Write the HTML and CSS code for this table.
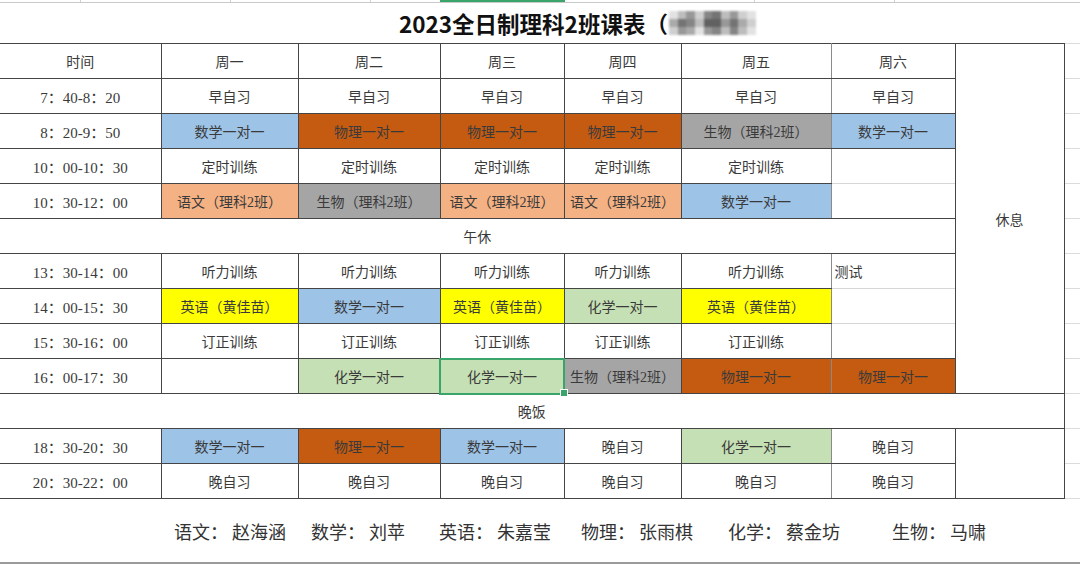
FILE: index.html
```html
<!DOCTYPE html>
<html lang="zh-CN">
<head>
<meta charset="utf-8">
<title>2023全日制理科2班课表</title>
<link rel="stylesheet" href="styles.css">
</head>
<body>
<div class="strip">
  <span class="tick t1"></span><span class="tick t2"></span><span class="tick t3"></span>
  <span class="sel-col"></span>
  <span class="tick t4"></span><span class="tick t5"></span>
</div>
<div class="title">
  <span>2023全日制理科2班课表（</span>
  <div class="mosaic">
    <i class="g1"></i><i class="g3"></i><i class="g5"></i><i class="g2"></i><i class="g6"></i><i class="g7"></i><i class="g3"></i><i class="g5"></i><i class="g2"></i><i class="g1"></i>
    <i class="g4"></i><i class="g7"></i><i class="g6"></i><i class="g3"></i><i class="g8"></i><i class="g8"></i><i class="g5"></i><i class="g7"></i><i class="g4"></i><i class="g2"></i>
    <i class="g2"></i><i class="g5"></i><i class="g4"></i><i class="g1"></i><i class="g5"></i><i class="g6"></i><i class="g3"></i><i class="g6"></i><i class="g3"></i><i class="g1"></i>
  </div>
</div>
<table class="sheet">
  <colgroup>
    <col class="c-time"><col class="c-mon"><col class="c-tue"><col class="c-wed"><col class="c-thu"><col class="c-fri"><col class="c-sat"><col class="c-rest"><col class="c-x">
  </colgroup>
  <tr class="r">
    <td class="first">时间</td><td>周一</td><td>周二</td><td>周三</td><td>周四</td><td>周五</td><td>周六</td>
    <td class="rest" rowspan="10">休息</td><td class="x"></td>
  </tr>
  <tr class="r">
    <td class="first time">7：40-8：20</td><td>早自习</td><td>早自习</td><td>早自习</td><td>早自习</td><td>早自习</td><td>早自习</td><td class="x"></td>
  </tr>
  <tr class="r">
    <td class="first time">8：20-9：50</td><td class="blue">数学一对一</td><td class="orange">物理一对一</td><td class="orange">物理一对一</td><td class="orange">物理一对一</td><td class="grey">生物（理科2班）</td><td class="blue">数学一对一</td><td class="x"></td>
  </tr>
  <tr class="r">
    <td class="first time">10：00-10：30</td><td>定时训练</td><td>定时训练</td><td>定时训练</td><td>定时训练</td><td>定时训练</td><td class="lb"></td><td class="x"></td>
  </tr>
  <tr class="r">
    <td class="first time">10：30-12：00</td><td class="salmon">语文（理科2班）</td><td class="grey">生物（理科2班）</td><td class="salmon">语文（理科2班）</td><td class="salmon">语文（理科2班）</td><td class="blue">数学一对一</td><td class="lt"></td><td class="x"></td>
  </tr>
  <tr>
    <td class="first" colspan="7">午休</td><td class="x"></td>
  </tr>
  <tr class="r">
    <td class="first time">13：30-14：00</td><td>听力训练</td><td>听力训练</td><td>听力训练</td><td>听力训练</td><td>听力训练</td><td class="lb left">测试</td><td class="x"></td>
  </tr>
  <tr class="r">
    <td class="first time">14：00-15：30</td><td class="yellow">英语（黄佳苗）</td><td class="blue">数学一对一</td><td class="yellow">英语（黄佳苗）</td><td class="green">化学一对一</td><td class="yellow">英语（黄佳苗）</td><td class="lt lb"></td><td class="x"></td>
  </tr>
  <tr class="r">
    <td class="first time">15：30-16：00</td><td>订正训练</td><td>订正训练</td><td>订正训练</td><td>订正训练</td><td>订正训练</td><td class="lt"></td><td class="x"></td>
  </tr>
  <tr class="r">
    <td class="first time">16：00-17：30</td><td></td><td class="green">化学一对一</td><td class="green sel">化学一对一</td><td class="grey">生物（理科2班）</td><td class="orange">物理一对一</td><td class="orange">物理一对一</td><td class="x"></td>
  </tr>
  <tr>
    <td class="first" colspan="8">晚饭</td><td class="x"></td>
  </tr>
  <tr class="r">
    <td class="first time">18：30-20：30</td><td class="blue">数学一对一</td><td class="orange">物理一对一</td><td class="blue">数学一对一</td><td>晚自习</td><td class="green">化学一对一</td><td>晚自习</td><td rowspan="2"></td><td class="x"></td>
  </tr>
  <tr class="r">
    <td class="first time">20：30-22：00</td><td>晚自习</td><td>晚自习</td><td>晚自习</td><td>晚自习</td><td>晚自习</td><td>晚自习</td><td class="x"></td>
  </tr>
</table>
<div class="teachers">
  <span class="item"><span>语文：</span><span class="name">赵海涵</span></span>
  <span class="item"><span>数学：</span><span class="name">刘苹</span></span>
  <span class="item"><span>英语：</span><span class="name">朱嘉莹</span></span>
  <span class="item"><span>物理：</span><span class="name">张雨棋</span></span>
  <span class="item"><span>化学：</span><span class="name">蔡金坊</span></span>
  <span class="item"><span>生物：</span><span class="name">马啸</span></span>
</div>
<div class="bottom-line"></div>
</body>
</html>
```
FILE: styles.css
```css
* { box-sizing: border-box; }
html, body { margin: 0; padding: 0; background: #fff; }
body {
  width: 1080px;
  height: 564px;
  overflow: hidden;
  font-family: "Noto Sans CJK SC", sans-serif;
  color: #333;
}

/* spreadsheet column-header remnant at the very top */
.strip {
  display: flex;
  height: 3px;
  border-bottom: 1px solid #c9c9c9;
}
.strip .tick { width: 1px; height: 2px; background: #d0d0d0; }
.strip .t1 { margin-left: 80px; }
.strip .t2 { margin-left: 149px; }
.strip .t3 { margin-left: 139px; }
.strip .sel-col { margin-left: 69px; width: 125px; height: 2px; background: #3aa56b; }
.strip .t4 { margin-left: 189px; }
.strip .t5 { margin-left: 139px; }

.title {
  height: 40px;
  display: flex;
  align-items: center;
  padding-left: 399px;
  font-size: 22.5px;
  font-weight: 700;
  color: #111;
}
.mosaic {
  display: grid;
  grid-template-columns: repeat(10, 8.7px);
  grid-auto-rows: 8px;
  margin-left: 1px;
  filter: blur(1.3px);
}
.mosaic i { display: block; }
.g1 { background: #e2e2e2; }
.g2 { background: #cfcfcf; }
.g3 { background: #bdbdbd; }
.g4 { background: #aaaaaa; }
.g5 { background: #989898; }
.g6 { background: #858585; }
.g7 { background: #747474; }
.g8 { background: #616161; }

/* timetable */
.sheet {
  border-collapse: collapse;
  table-layout: fixed;
  width: 1080px;
  font-family: "Liberation Serif", "Noto Sans CJK SC", serif;
  font-size: 14px;
  color: #3a3a3a;
}
.c-time { width: 161px; }
.c-mon { width: 137px; }
.c-tue { width: 142px; }
.c-wed { width: 124px; }
.c-thu { width: 117px; }
.c-fri { width: 150px; }
.c-sat { width: 124px; }
.c-rest { width: 109px; }
.c-x { width: 16px; }

.sheet td {
  border: 1px solid #454545;
  height: 35px;
  padding: 0;
  text-align: center;
  white-space: nowrap;
  overflow: hidden;
}
.sheet td.time { font-size: 15px; }
.sheet td.first { border-left: none; }
.sheet tr.r td:nth-child(6) { border-right-color: #8a8a8a; }
.sheet tr.r td:nth-child(7) { border-left-color: #8a8a8a; }
.sheet td.x { border-color: #dcdcdc; }
.sheet td.lb { border-bottom-color: #d6d6d6; }
.sheet td.lt { border-top-color: #d6d6d6; }
.sheet td.left { text-align: left; padding-left: 3px; }

.blue { background: #9dc3e6; }
.orange { background: #c55a11; }
.grey { background: #a5a5a5; }
.salmon { background: #f4b183; }
.yellow { background: #ffff00; }
.green { background: #c5e0b4; }

.sheet td.sel {
  position: relative;
  overflow: visible;
  outline: 2px solid #3aa56b;
  outline-offset: -1px;
}
.sheet td.sel::after {
  content: "";
  position: absolute;
  right: -4px;
  bottom: -4px;
  width: 6px;
  height: 6px;
  background: #3aa56b;
  border: 1px solid #fff;
}

/* teacher list */
.teachers {
  height: 63px;
  display: grid;
  grid-template-columns: 137px 128px 142px 147px 164px auto;
  align-items: center;
  padding-left: 174px;
  font-size: 18px;
  color: #333;
}
.teachers .name { margin-left: 4px; }
.bottom-line {
  height: 2px;
  background: #9a9a9a;
}
```
